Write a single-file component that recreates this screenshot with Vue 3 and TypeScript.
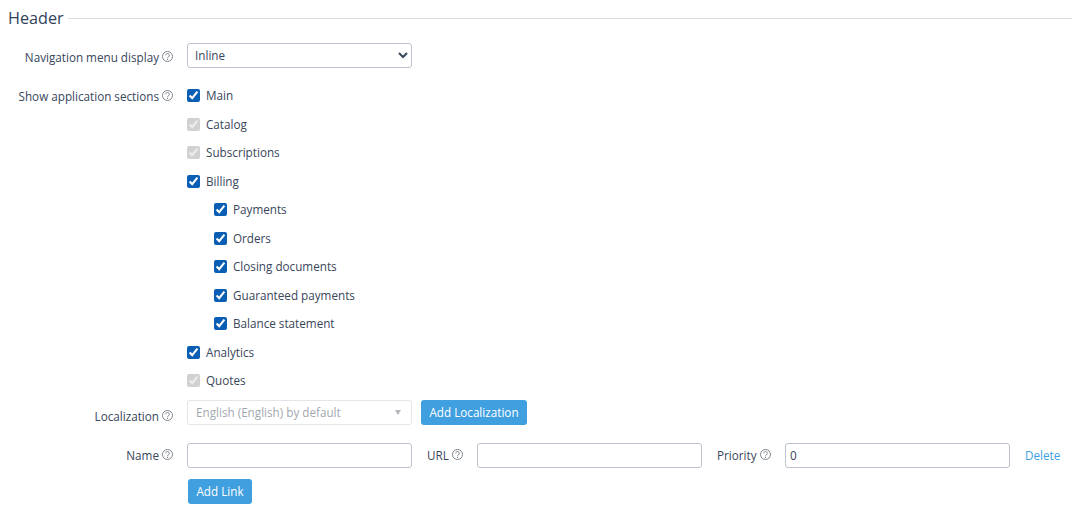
<script setup lang="ts">
interface Section { label: string; disabled?: boolean; children?: string[] }
const sections: Section[] = [
  { label: 'Main' },
  { label: 'Catalog', disabled: true },
  { label: 'Subscriptions', disabled: true },
  { label: 'Billing', children: ['Payments', 'Orders', 'Closing documents', 'Guaranteed payments', 'Balance statement'] },
  { label: 'Analytics' },
  { label: 'Quotes', disabled: true },
]
</script>

<template>
  <div class="page">
    <div class="legend"><span class="legend-text">Header</span><span class="legend-line"></span></div>

    <div class="row row-nav">
      <div class="label label-nudge"><span>Navigation menu display</span><svg class="help" viewBox="0 0 11 11"><circle cx="5.5" cy="5.5" r="5" /><path d="M3.7 4.3a1.8 1.8 0 1 1 2.8 1.5c-.7.4-1 .8-1 1.4" /><path d="M5.5 7.9v1.1" /></svg></div>
      <select class="native-select">
        <option>Inline</option>
      </select>
    </div>

    <div class="row row-sections">
      <div class="label label-sections"><span>Show application sections</span><svg class="help" viewBox="0 0 11 11"><circle cx="5.5" cy="5.5" r="5" /><path d="M3.7 4.3a1.8 1.8 0 1 1 2.8 1.5c-.7.4-1 .8-1 1.4" /><path d="M5.5 7.9v1.1" /></svg></div>
      <div class="checks">
        <template v-for="s in sections" :key="s.label">
          <label class="check">
            <input type="checkbox" checked :disabled="s.disabled" />
            <span>{{ s.label }}</span>
          </label>
          <label v-for="c in s.children" :key="c" class="check child">
            <input type="checkbox" checked />
            <span>{{ c }}</span>
          </label>
        </template>
      </div>
    </div>

    <div class="row row-loc">
      <div class="label label-loc"><span>Localization</span><svg class="help help-loc" viewBox="0 0 11 11"><circle cx="5.5" cy="5.5" r="5" /><path d="M3.7 4.3a1.8 1.8 0 1 1 2.8 1.5c-.7.4-1 .8-1 1.4" /><path d="M5.5 7.9v1.1" /></svg></div>
      <div class="fake-select">
        <span>English (English) by default</span>
        <span class="caret"></span>
      </div>
      <button class="btn btn-loc">Add Localization</button>
    </div>

    <div class="row row-link">
      <div class="label lifted"><span>Name</span><svg class="help" viewBox="0 0 11 11"><circle cx="5.5" cy="5.5" r="5" /><path d="M3.7 4.3a1.8 1.8 0 1 1 2.8 1.5c-.7.4-1 .8-1 1.4" /><path d="M5.5 7.9v1.1" /></svg></div>
      <input class="text-input" type="text" />
      <div class="inline-label url-label lifted"><span>URL</span><svg class="help" viewBox="0 0 11 11"><circle cx="5.5" cy="5.5" r="5" /><path d="M3.7 4.3a1.8 1.8 0 1 1 2.8 1.5c-.7.4-1 .8-1 1.4" /><path d="M5.5 7.9v1.1" /></svg></div>
      <input class="text-input" type="text" />
      <div class="inline-label priority-label lifted"><span>Priority</span><svg class="help" viewBox="0 0 11 11"><circle cx="5.5" cy="5.5" r="5" /><path d="M3.7 4.3a1.8 1.8 0 1 1 2.8 1.5c-.7.4-1 .8-1 1.4" /><path d="M5.5 7.9v1.1" /></svg></div>
      <input class="text-input" type="text" value="0" />
      <a class="delete lifted" href="#">Delete</a>
    </div>

    <div class="add-link"><button class="btn btn-link">Add Link</button></div>
  </div>
</template>

<style>
html, body { margin: 0; background: #fff; }
</style>

<style scoped>
.page {
  width: 1072px;
  height: 513px;
  overflow: hidden;
  box-sizing: border-box;
  padding-top: 7px;
  font-family: "Open Sans", sans-serif;
  font-size: 11.7px;
  color: #38465a;
}
.legend { display: flex; align-items: center; height: 22px; padding-left: 8px; }
.legend-text { font-size: 16.2px; line-height: 22px; color: #2f4258; }
.legend-line { flex: 1; height: 1px; background: #d9dee5; margin-left: 4px; }
.row { display: flex; align-items: center; }
.row-nav { margin-top: 14px; height: 25px; }
.row-sections { margin-top: 13.5px; align-items: flex-start; }
.row-loc { margin-top: 5px; height: 25px; }
.row-link { margin-top: 18px; height: 25px; }
.label {
  width: 173px;
  flex: none;
  margin-right: 14px;
  display: flex;
  justify-content: flex-end;
  align-items: center;
  white-space: nowrap;
  line-height: 16px;
}
.label-nudge { padding-top: 2px; }
.label-sections { margin-top: 6px; }
.label-loc { padding-top: 7px; }
.lifted { padding-bottom: 2px; }
.help {
  width: 11px;
  height: 11px;
  margin-left: 3px;
  fill: none;
  stroke: #7d858f;
  stroke-width: 1;
  flex: none;
}
.help-loc { margin-top: -2px; }
.native-select {
  width: 225px;
  height: 25px;
  box-sizing: border-box;
  border: 1px solid #bcc3cd;
  border-radius: 3px;
  background: #fff;
  padding: 0 3px 2px;
  font: inherit;
  color: #38465a;
}
.checks { display: flex; flex-direction: column; }
.check {
  display: flex;
  align-items: center;
  height: 28.5px;
  line-height: 16px;
  white-space: nowrap;
}
.check span { padding-bottom: 1.4px; }
.check input {
  width: 13px;
  height: 13px;
  margin: 0 6px 0 0;
  accent-color: #0a5fb4;
}
.check.child { padding-left: 27px; }
.fake-select {
  width: 225px;
  height: 25px;
  box-sizing: border-box;
  border: 1px solid #e2e5e9;
  border-radius: 3px;
  padding: 0 8px 2px;
  display: flex;
  align-items: center;
  justify-content: space-between;
  color: #a3a8af;
}
.caret {
  width: 0;
  height: 0;
  border-left: 3.5px solid transparent;
  border-right: 3.5px solid transparent;
  border-top: 5px solid #b4b8bd;
  margin-right: 2px;
  margin-top: 2px;
}
.btn {
  height: 25px;
  box-sizing: border-box;
  border: 0;
  border-radius: 3px;
  background: #3f9fdf;
  color: #fff;
  font: inherit;
  padding: 0 0 2px;
}
.btn-loc { margin-left: 9px; width: 106px; }
.btn-link { width: 64px; }
.text-input {
  width: 225px;
  height: 25px;
  box-sizing: border-box;
  border: 1px solid #bcc3cd;
  border-radius: 3px;
  padding: 0 4px 2px;
  font: inherit;
  color: #38465a;
  background: #fff;
  outline: none;
}
.inline-label { display: flex; align-items: center; white-space: nowrap; line-height: 16px; flex: none; }
.url-label { margin-left: 15px; width: 50px; }
.priority-label { margin-left: 15px; width: 68px; }
.delete { margin-left: 15px; color: #3f9fdf; text-decoration: none; }
.add-link { padding-left: 188px; margin-top: 11px; }
</style>
